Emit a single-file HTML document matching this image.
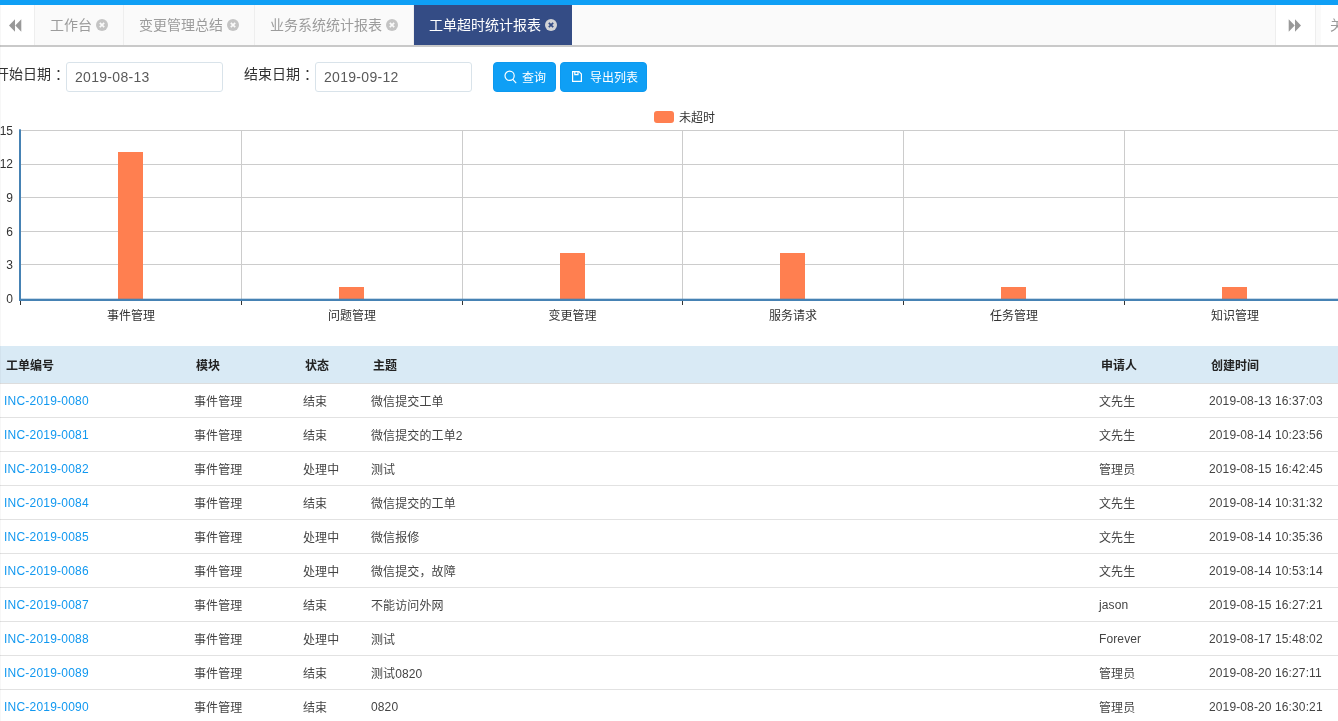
<!DOCTYPE html>
<html lang="zh-CN">
<head>
<meta charset="utf-8">
<title>工单超时统计报表</title>
<style>
*{box-sizing:border-box;}
html,body{margin:0;padding:0;}
body>*{will-change:transform;}
body{width:1338px;height:721px;overflow:hidden;background:#fff;position:relative;
 font-family:"Liberation Sans","Noto Sans CJK SC",sans-serif;font-size:12px;color:#333;}
.topbar{position:absolute;left:0;top:0;width:1338px;height:5px;background:#0f9ff5;}
.edge{position:absolute;left:0;top:5px;width:1px;height:716px;background:rgba(0,0,0,0.03);}
.tabs{position:absolute;left:0;top:5px;width:1338px;height:42px;background:#fafafa;border-bottom:2px solid #c9c9c9;font-size:14px;color:#9c9c9c;}
.tabs .btn{position:absolute;top:0;height:40px;background:#fff;}
.tabs .left{left:0;width:35px;border-right:1px solid #eee;}
.tabs .right{left:1275px;width:41px;border-left:1px solid #eee;border-right:1px solid #eee;}
.tabs .drop{left:1321px;width:120px;padding-left:9px;line-height:40px;white-space:nowrap;}
.tab{position:absolute;top:0;height:40px;line-height:40px;padding:0 15px;border-right:1px solid #eee;white-space:nowrap;}
.tab.active{background:#344c85;color:#fff;border-right:none;}
.tab svg{vertical-align:-1px;margin-left:4px;}
.btn svg{position:absolute;}
.form{position:absolute;left:0;top:47px;width:1338px;height:60px;font-size:14px;}
.lbl{position:absolute;top:14px;height:30px;line-height:26px;white-space:nowrap;color:#333;}
.cn{position:relative;left:4px;}
.inp{position:absolute;top:15px;height:30px;width:157px;border:1px solid #d9e3ea;border-radius:3px;background:#fff;
 padding:0 0 0 8px;line-height:28px;font-size:14px;color:#5a5a5a;letter-spacing:0.3px;}
.b{position:absolute;top:15px;height:30px;border-radius:4px;background:#0f9ff5;border:1px solid #0c99ef;color:#fff;font-size:12px;line-height:30px;white-space:nowrap;}
.b svg{position:absolute;}
.b span{position:absolute;top:-0.5px;line-height:30px;}
.chart{position:absolute;left:0;top:100px;}
.chart text{font-family:"Liberation Sans","Noto Sans CJK SC",sans-serif;font-size:12px;fill:#333;}
table{position:absolute;left:0;top:346px;width:1338px;border-collapse:separate;border-spacing:0;table-layout:fixed;font-size:12px;}
th{height:38px;background:#d9eaf5;text-align:left;font-weight:bold;color:#222;padding:0 0 0 6px;border-bottom:1px solid #ddd;}
td{height:34px;padding:0 0 0 4px;border-bottom:1px solid #e2e2e2;color:#444;white-space:nowrap;letter-spacing:0.12px;}
td a{color:#1198f0;letter-spacing:0.21px;}
</style>
</head>
<body>
<div class="topbar"></div>
<div class="tabs">
  <div class="btn left"><svg style="left:9px;top:13.5px" width="13" height="13" viewBox="0 0 13 13"><path d="M6 0.3V12.7L0 6.5zM12.3 0.3V12.7L6.3 6.5z" fill="#999"/></svg></div>
  <div class="tab" style="left:35px;width:89px">工作台<svg width="12" height="12" viewBox="0 0 12 12"><circle cx="6" cy="6" r="6" fill="#c4c4c4"/><path d="M3.8 3.8L8.2 8.2M8.2 3.8L3.8 8.2" stroke="#fafafa" stroke-width="1.7"/></svg></div>
  <div class="tab" style="left:124px;width:131px">变更管理总结<svg width="12" height="12" viewBox="0 0 12 12"><circle cx="6" cy="6" r="6" fill="#c4c4c4"/><path d="M3.8 3.8L8.2 8.2M8.2 3.8L3.8 8.2" stroke="#fafafa" stroke-width="1.7"/></svg></div>
  <div class="tab" style="left:255px;width:159px">业务系统统计报表<svg width="12" height="12" viewBox="0 0 12 12"><circle cx="6" cy="6" r="6" fill="#c4c4c4"/><path d="M3.8 3.8L8.2 8.2M8.2 3.8L3.8 8.2" stroke="#fafafa" stroke-width="1.7"/></svg></div>
  <div class="tab active" style="left:414px;width:158px">工单超时统计报表<svg width="12" height="12" viewBox="0 0 12 12"><circle cx="6" cy="6" r="6" fill="#d2d3d6"/><path d="M3.8 3.8L8.2 8.2M8.2 3.8L3.8 8.2" stroke="#344c85" stroke-width="1.7"/></svg></div>
  <div class="btn right"><svg style="left:12.3px;top:13.5px" width="13" height="13" viewBox="0 0 13 13"><path d="M0.7 0.3V12.7L6.7 6.5zM7 0.3V12.7L13 6.5z" fill="#999"/></svg></div>
  <div class="btn drop">关闭操作</div>
</div>
<div class="form">
  <div class="lbl" style="left:-5px">开始日期<span class="cn">：</span></div>
  <div class="inp" style="left:66px">2019-08-13</div>
  <div class="lbl" style="left:244px">结束日期<span class="cn">：</span></div>
  <div class="inp" style="left:315px">2019-09-12</div>
  <div class="b" style="left:493px;width:63px"><svg style="left:10px;top:7px" width="13" height="14" viewBox="0 0 13 14"><circle cx="5.6" cy="5.8" r="4.6" fill="none" stroke="#fff" stroke-width="1.2"/><path d="M8.8 9.4L12.2 13.2" stroke="#fff" stroke-width="1.2"/></svg><span style="left:28px">查询</span></div>
  <div class="b" style="left:560px;width:87px"><svg style="left:11px;top:8px" width="10" height="11" viewBox="0 0 10 11"><path d="M0.6 0.6H7L9.4 3V10.4H0.6zM2.8 0.6V3.6H6V0.6" fill="none" stroke="#fff" stroke-width="1.2"/></svg><span style="left:29px">导出列表</span></div>
</div>
<svg class="chart" width="1338" height="240" viewBox="0 100 1338 240">
<rect x="20" y="130" width="1330" height="1" fill="#ccc"/>
<rect x="20" y="164" width="1330" height="1" fill="#ccc"/>
<rect x="20" y="197" width="1330" height="1" fill="#ccc"/>
<rect x="20" y="231" width="1330" height="1" fill="#ccc"/>
<rect x="20" y="264" width="1330" height="1" fill="#ccc"/>
<rect x="241" y="130" width="1" height="169" fill="#ccc"/>
<rect x="462" y="130" width="1" height="169" fill="#ccc"/>
<rect x="682" y="130" width="1" height="169" fill="#ccc"/>
<rect x="903" y="130" width="1" height="169" fill="#ccc"/>
<rect x="1124" y="130" width="1" height="169" fill="#ccc"/>
<rect x="1345" y="130" width="1" height="169" fill="#ccc"/>
<rect x="118" y="152" width="25" height="147" fill="#ff7f50"/>
<rect x="339" y="287" width="25" height="12" fill="#ff7f50"/>
<rect x="560" y="253" width="25" height="46" fill="#ff7f50"/>
<rect x="780" y="253" width="25" height="46" fill="#ff7f50"/>
<rect x="1001" y="287" width="25" height="12" fill="#ff7f50"/>
<rect x="1222" y="287" width="25" height="12" fill="#ff7f50"/>
<rect x="19" y="129.3" width="2" height="171.7" fill="#4682b4"/>
<rect x="19" y="298.7" width="1330" height="2.3" fill="#4682b4"/>
<rect x="20" y="301" width="1" height="4" fill="#333"/>
<rect x="241" y="301" width="1" height="4" fill="#333"/>
<rect x="462" y="301" width="1" height="4" fill="#333"/>
<rect x="682" y="301" width="1" height="4" fill="#333"/>
<rect x="903" y="301" width="1" height="4" fill="#333"/>
<rect x="1124" y="301" width="1" height="4" fill="#333"/>
<rect x="1345" y="301" width="1" height="4" fill="#333"/>
<text x="131.0" y="319.5" text-anchor="middle" class="xl">事件管理</text>
<text x="352.0" y="319.5" text-anchor="middle" class="xl">问题管理</text>
<text x="572.5" y="319.5" text-anchor="middle" class="xl">变更管理</text>
<text x="793.0" y="319.5" text-anchor="middle" class="xl">服务请求</text>
<text x="1014.0" y="319.5" text-anchor="middle" class="xl">任务管理</text>
<text x="1235.0" y="319.5" text-anchor="middle" class="xl">知识管理</text>
<text x="13" y="135" text-anchor="end" class="yl">15</text>
<text x="13" y="168.2" text-anchor="end" class="yl">12</text>
<text x="13" y="202" text-anchor="end" class="yl">9</text>
<text x="13" y="236" text-anchor="end" class="yl">6</text>
<text x="13" y="269" text-anchor="end" class="yl">3</text>
<text x="13" y="303" text-anchor="end" class="yl">0</text>
<rect x="654" y="111" width="20" height="12" rx="3" ry="3" fill="#ff7f50"/>
<text x="679" y="122" class="xl">未超时</text>
</svg>
<table>
<colgroup><col style="width:190px"><col style="width:109px"><col style="width:68px"><col style="width:728px"><col style="width:110px"><col style="width:133px"></colgroup>
<thead><tr><th>工单编号</th><th>模块</th><th>状态</th><th>主题</th><th>申请人</th><th>创建时间</th></tr></thead>
<tbody>
<tr><td class="c1"><a>INC-2019-0080</a></td><td class="c2">事件管理</td><td class="c3">结束</td><td class="c4">微信提交工单</td><td class="c5">文先生</td><td class="c6">2019-08-13 16:37:03</td></tr>
<tr><td class="c1"><a>INC-2019-0081</a></td><td class="c2">事件管理</td><td class="c3">结束</td><td class="c4">微信提交的工单2</td><td class="c5">文先生</td><td class="c6">2019-08-14 10:23:56</td></tr>
<tr><td class="c1"><a>INC-2019-0082</a></td><td class="c2">事件管理</td><td class="c3">处理中</td><td class="c4">测试</td><td class="c5">管理员</td><td class="c6">2019-08-15 16:42:45</td></tr>
<tr><td class="c1"><a>INC-2019-0084</a></td><td class="c2">事件管理</td><td class="c3">结束</td><td class="c4">微信提交的工单</td><td class="c5">文先生</td><td class="c6">2019-08-14 10:31:32</td></tr>
<tr><td class="c1"><a>INC-2019-0085</a></td><td class="c2">事件管理</td><td class="c3">处理中</td><td class="c4">微信报修</td><td class="c5">文先生</td><td class="c6">2019-08-14 10:35:36</td></tr>
<tr><td class="c1"><a>INC-2019-0086</a></td><td class="c2">事件管理</td><td class="c3">处理中</td><td class="c4">微信提交，故障</td><td class="c5">文先生</td><td class="c6">2019-08-14 10:53:14</td></tr>
<tr><td class="c1"><a>INC-2019-0087</a></td><td class="c2">事件管理</td><td class="c3">结束</td><td class="c4">不能访问外网</td><td class="c5">jason</td><td class="c6">2019-08-15 16:27:21</td></tr>
<tr><td class="c1"><a>INC-2019-0088</a></td><td class="c2">事件管理</td><td class="c3">处理中</td><td class="c4">测试</td><td class="c5">Forever</td><td class="c6">2019-08-17 15:48:02</td></tr>
<tr><td class="c1"><a>INC-2019-0089</a></td><td class="c2">事件管理</td><td class="c3">结束</td><td class="c4">测试0820</td><td class="c5">管理员</td><td class="c6">2019-08-20 16:27:11</td></tr>
<tr><td class="c1"><a>INC-2019-0090</a></td><td class="c2">事件管理</td><td class="c3">结束</td><td class="c4">0820</td><td class="c5">管理员</td><td class="c6">2019-08-20 16:30:21</td></tr>
<tr><td class="c1"><a>INC-2019-0091</a></td><td class="c2">事件管理</td><td class="c3">结束</td><td class="c4">测试</td><td class="c5">管理员</td><td class="c6">2019-08-20 16:35:42</td></tr>
</tbody>
</table>
<div class="edge"></div>
</body>
</html>
